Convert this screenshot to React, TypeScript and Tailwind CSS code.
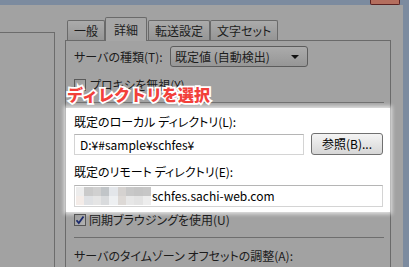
import React from 'react'

const UI_FONT = "font-['Noto_Sans_CJK_JP','Noto_Sans',sans-serif] [font-feature-settings:'palt']"

const MOSAIC_TOP = ['#ededed', '#cacaca', '#d0d0d0', '#c1c5c8', '#e3e6ea', '#d5d2d0', '#c8c8c8', '#c5c5c5', '#c7c7c7']
const MOSAIC_BOTTOM = ['#f4ece8', '#dfe1e4', '#e5e5e5', '#d9dbdd', '#eef0f2', '#ddd9d6', '#e7e7e7', '#e3e3e3', '#ededed']

function Tab({ label, active }: { label: string; active?: boolean }) {
  if (active) {
    return (
      <div className="relative z-10 -mb-px h-[24px] px-[8px] flex items-center bg-[#a6a6a6] border border-b-0 border-[#6a6a6a] rounded-t-[2px] text-[12px] text-[#1c1c1c]">
        {label}
      </div>
    )
  }
  return (
    <div className="h-[20px] px-[6px] flex items-center bg-gradient-to-b from-[#ababab] to-[#959595] border border-b-0 border-[#6a6a6a] rounded-t-[2px] text-[12px] text-[#1c1c1c]">
      {label}
    </div>
  )
}

export default function App() {
  return (
    <div className={`relative w-[409px] h-[267px] overflow-hidden bg-[#7c8b9f] ${UI_FONT}`}>
      {/* close button peeking at the top */}
      <div className="absolute top-0 left-[370px] w-[30px] h-[5px] bg-[#b46e5e] border border-t-0 border-[#5a2222] rounded-b-[2px]" />

      <div className="mt-[5px] mr-[6px] h-[262px] bg-[#a2a2a2] flex">
        {/* left list pane */}
        <div className="w-[55px] pt-[27px] shrink-0">
          <div className="h-full border-t border-r border-[#6c6c6c]" />
        </div>

        <div className="ml-[10px] w-[326px] flex flex-col">
          {/* tabs */}
          <div className="h-[35px] pl-[2px] flex items-end">
            <Tab label="一般" />
            <Tab label="詳細" active />
            <div className="w-[1px]" />
            <Tab label="転送設定" />
            <Tab label="文字セット" />
          </div>

          {/* tab panel */}
          <div className="flex-1 border border-b-0 border-[#6a6a6a] pl-[8px] pr-[6px] text-[12px] text-[#1c1c1c]">
            <div className="mt-[5px] h-[21px] flex items-center">
              <span className="w-[96px]">サーバの種類(T):</span>
              <div className="w-[138px] h-[21px] flex items-center justify-between pl-[4px] pr-[8px] border border-[#5c5c5c] rounded-[3px] bg-gradient-to-b from-[#ababab] to-[#969696]">
                <span>既定値 (自動検出)</span>
                <span className="w-0 h-0 border-l-[4px] border-r-[4px] border-t-[4px] border-l-transparent border-r-transparent border-t-[#111]" />
              </div>
            </div>

            <div className="mt-[11px] h-[13px] flex items-center gap-[4px]">
              <span className="w-[12px] h-[12px] border border-[#5a5a5a] bg-gradient-to-br from-[#9a9a9a] to-[#b0b0b0]" />
              <span>プロキシを無視(Y)</span>
            </div>

            <div className="mt-[11px] h-px bg-[#6e6e6e]" />

            {/* highlighted (not dimmed) section */}
            <div className="mt-[5px] -ml-[8px] -mr-[6px] pl-[8px] pr-[6px] h-[104px] bg-white text-black shadow-[0_0_4px_2px_rgba(255,255,255,0.7)]">
              <div className="pt-[6px] h-[22px] leading-[16px]">既定のローカル ディレクトリ(L):</div>
              <div className="mt-[4px] h-[21px] flex gap-[7px]">
                <div className="w-[230px] h-[21px] flex items-center pl-[5px] border border-[#d4d4d4] border-t-[#b5b5b5] text-[12px]">
                  D:¥#sample¥schfes¥
                </div>
                <button className="w-[72px] h-[22px] -mt-px flex items-center justify-center border border-[#707070] rounded-[3px] bg-gradient-to-b from-[#f4f4f4] to-[#d6d6d6] text-[12px]">
                  参照(B)...
                </button>
              </div>
              <div className="mt-[9px] h-[16px] leading-[16px]">既定のリモート ディレクトリ(E):</div>
              <div className="mt-[5px] h-[22px] w-[309px] flex items-center pl-[1px] border border-[#d4d4d4] border-t-[#b5b5b5]">
                <div className="flex flex-col w-[75px]">
                  <div className="flex h-[9px]">
                    {MOSAIC_TOP.map((c, i) => (
                      <div key={i} className="flex-1" style={{ backgroundColor: c }} />
                    ))}
                  </div>
                  <div className="flex h-[9px]">
                    {MOSAIC_BOTTOM.map((c, i) => (
                      <div key={i} className="flex-1" style={{ backgroundColor: c }} />
                    ))}
                  </div>
                </div>
                <span className="ml-[1px]">schfes.sachi-web.com</span>
              </div>
            </div>

            <div className="mt-[1px] h-[14px] flex items-center gap-[3px]">
              <span className="relative w-[12px] h-[12px] border border-[#555] bg-gradient-to-br from-[#9c9c9c] to-[#b3b3b3]">
                <svg viewBox="0 0 12 12" className="absolute -left-px -top-px w-[12px] h-[12px]">
                  <path d="M2.5 6.2 L4.8 9 L9.5 2.5" fill="none" stroke="#1d2c6e" strokeWidth="1.8" />
                </svg>
              </span>
              <span>同期ブラウジングを使用(U)</span>
            </div>

            <div className="mt-[10px] h-px bg-[#6e6e6e]" />

            <div className="mt-[10px] h-[16px] leading-[16px]">サーバのタイムゾーン オフセットの調整(A):</div>
          </div>
        </div>
      </div>

      {/* red annotation */}
      <div className="absolute left-[67px] top-[84px] text-[16px] leading-[20px] font-black text-[#f2403a] [-webkit-text-stroke:3.5px_white] [paint-order:stroke_fill] [font-feature-settings:normal] font-['Noto_Sans_CJK_JP',sans-serif]">
        ディレクトリを選択
      </div>
    </div>
  )
}
